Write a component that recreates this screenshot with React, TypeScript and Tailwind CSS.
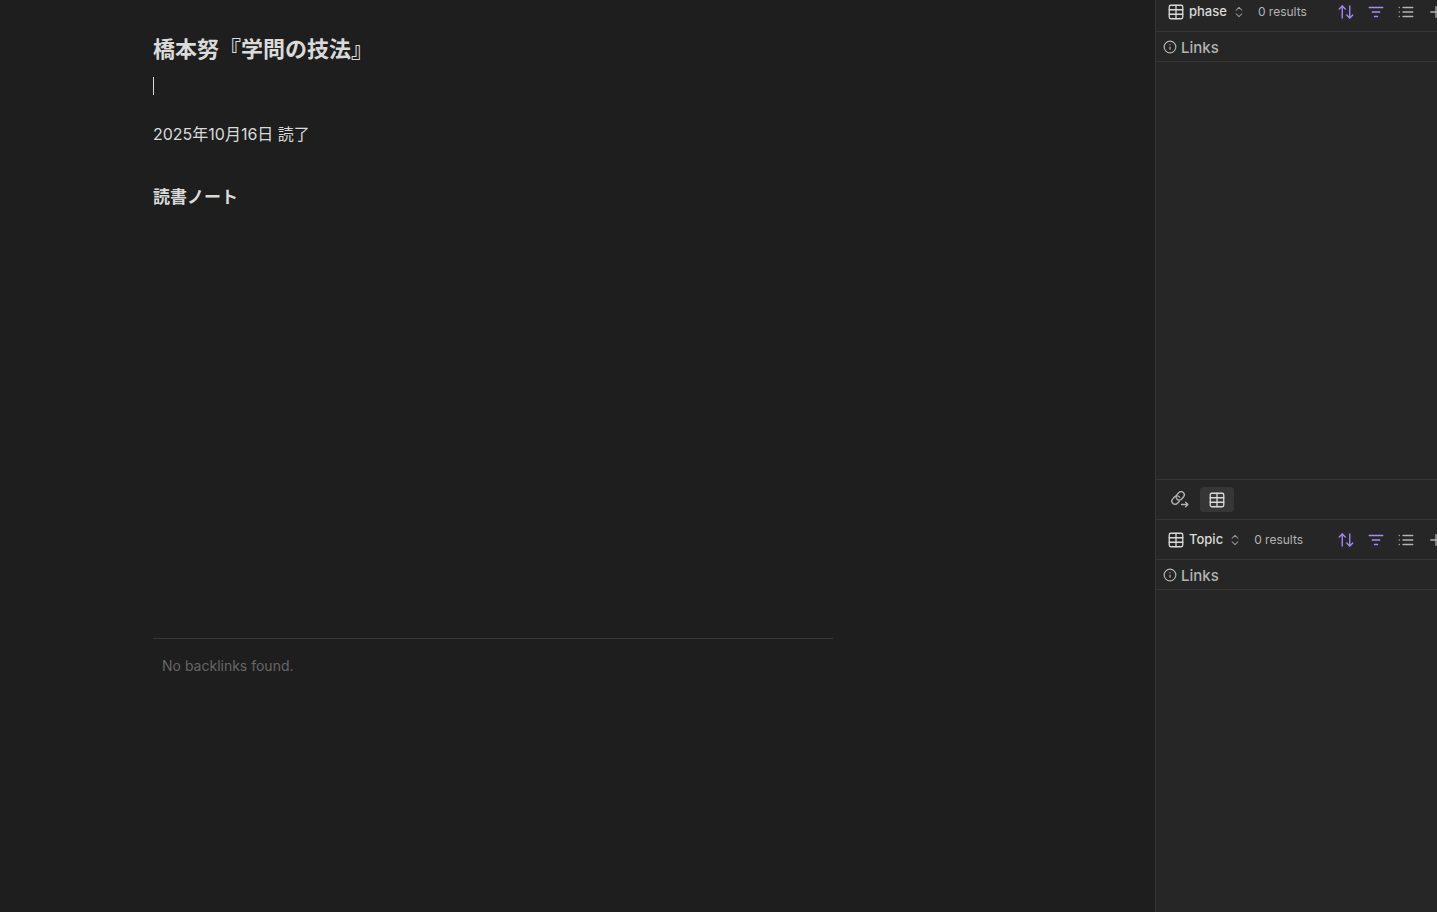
import React from 'react';
import { ArrowUpDown, ChevronsUpDown, Info, Plus, Table } from 'lucide-react';

const iconProps = {
  width: 18,
  height: 18,
  viewBox: '0 0 24 24',
  fill: 'none',
  stroke: 'currentColor',
  strokeWidth: 1.75,
  strokeLinecap: 'round' as const,
  strokeLinejoin: 'round' as const,
};

const FilterIcon = () => (
  <svg {...iconProps}>
    <path d="M3 6h18M7 12h10M10 18h4" />
  </svg>
);

const ListIcon = () => (
  <svg {...iconProps}>
    <path d="M3 6h.01M3 12h.01M3 18h.01M8 6h13M8 12h13M8 18h13" />
  </svg>
);

const OutgoingLinkIcon = () => (
  <svg {...iconProps}>
    <g transform="translate(-0.5 -0.7) scale(0.83)" strokeWidth={2.2}>
      <path d="M9.500 13a5.300 5.300 0 0 0 8.040 1l3-3.500a5.100 5.100 0 0 0-7.500-7l-3 3.300a5 5 0 0 0-1 5" />
      <path d="M14.500 11a5.300 5.300 0 0 0-8.040-1l-3 3.500a5.100 5.100 0 0 0 7.500 7l3-3.300" />
    </g>
    <path d="M14 18h8.500M19.500 15l3 3-3 3" />
  </svg>
);

interface BasePanelProps {
  name: string;
  headerClass: string;
}

// Base view: toolbar, column header, empty body
const BasePanel: React.FC<BasePanelProps> = ({ name, headerClass }) => (
  <>
    <div className={`flex items-center shrink-0 pl-[11px] border-b border-[#363636] overflow-hidden ${headerClass}`}>
      <button className="flex items-center shrink-0 text-[13px] font-medium text-[#dadada]">
        <Table size={18} strokeWidth={1.75} className="mr-1" />
        {name}
        <ChevronsUpDown size={14} strokeWidth={1.75} className="ml-[5px] text-[#999999]" />
      </button>
      <span className="ml-3 shrink-0 text-xs text-[#b3b3b3]">0 results</span>
      <div className="-mr-2 ml-auto flex shrink-0 gap-3 text-[#b3b3b3]">
        <button aria-label="Sort" className="text-[#a68af9]">
          <ArrowUpDown size={18} strokeWidth={1.75} />
        </button>
        <button aria-label="Filter" className="text-[#a68af9]">
          <FilterIcon />
        </button>
        <button aria-label="Properties">
          <ListIcon />
        </button>
        <button aria-label="New">
          <Plus size={18} strokeWidth={1.75} />
        </button>
      </div>
    </div>
    <div className="flex h-[30px] shrink-0 items-center gap-1 border-b border-[#363636] pl-[7px] text-[#b3b3b3]">
      <Info size={14} strokeWidth={2} />
      <span className="pt-[2px] text-[15px] leading-5 font-medium">Links</span>
    </div>
  </>
);

const App: React.FC = () => {
  return (
    <div className="flex h-screen overflow-hidden bg-[#1e1e1e] font-['Inter','Noto_Sans_CJK_JP',sans-serif] text-[#dadada]">
      <main className="min-w-0 flex-1 pl-[153px]">
        <article className="flex min-h-[638px] max-w-[680px] flex-col pt-[33px]">
          <h1 className="text-[22px] leading-8 font-bold">橋本努『学問の技法』</h1>
          <div className="mt-3 h-[18px] w-px bg-[#dadada]" />
          <p className="mt-[27px] text-base leading-6">2025年10月16日 読了</p>
          <h2 className="mt-[39px] text-[17px] leading-6 font-bold">読書ノート</h2>
        </article>
        <footer className="max-w-[680px] border-t border-[#363636] px-[9px] pt-[17px] text-sm text-[#666666]">
          No backlinks found.
        </footer>
      </main>

      <aside className="grid w-[282px] shrink-0 grid-rows-[479fr_433fr] border-l border-[#363636] bg-[#262626]">
        <section className="flex min-h-0 flex-col">
          <BasePanel name="phase" headerClass="h-8 pb-[7px]" />
        </section>
        <section className="flex min-h-0 flex-col border-t border-[#363636]">
          <div className="flex h-10 shrink-0 items-center gap-[3px] border-b border-[#363636] pl-[7px]">
            <button aria-label="Outgoing links" className="flex h-[25px] w-[34px] items-center justify-center text-[#b3b3b3]">
              <OutgoingLinkIcon />
            </button>
            <button aria-label="Base" className="flex h-[25px] w-[34px] items-center justify-center rounded-[4px] bg-[#363636]">
              <Table size={18} strokeWidth={1.75} />
            </button>
          </div>
          <BasePanel name="Topic" headerClass="h-10" />
        </section>
      </aside>
    </div>
  );
};

export default App;
